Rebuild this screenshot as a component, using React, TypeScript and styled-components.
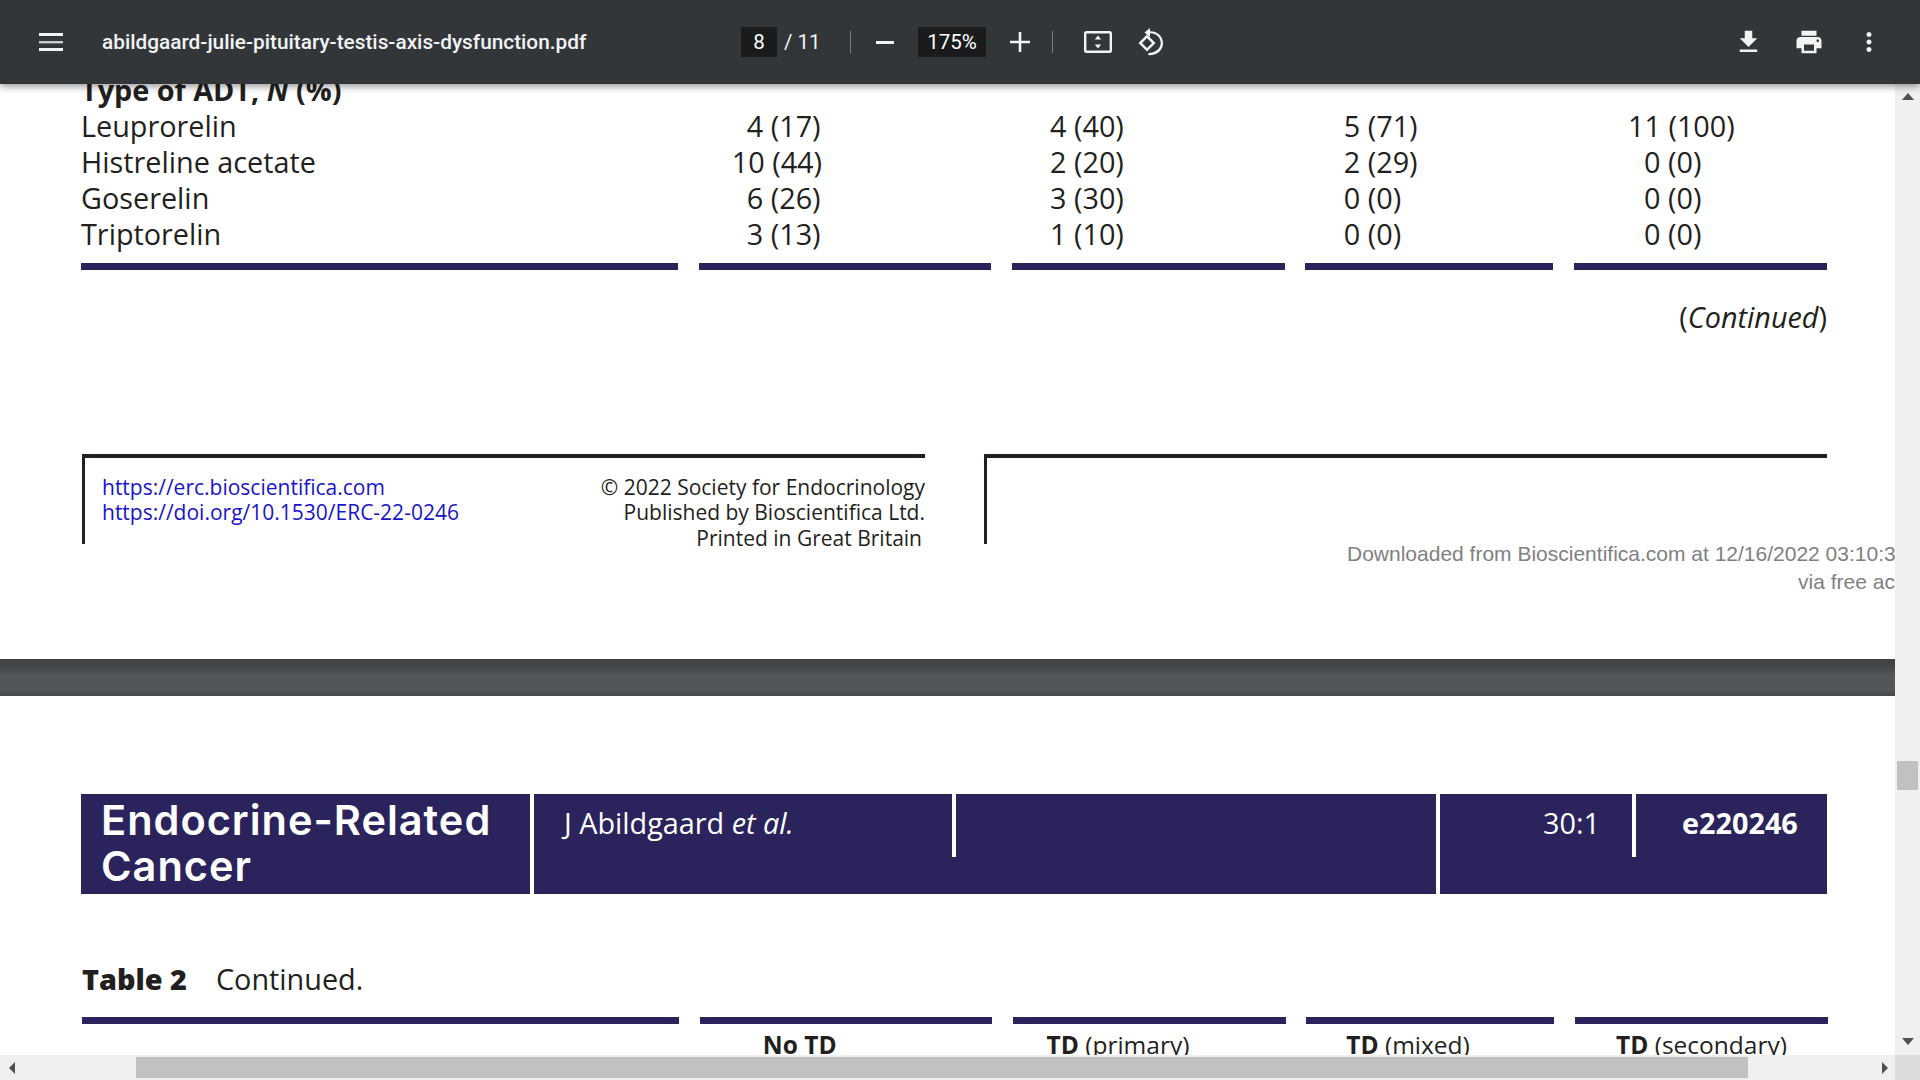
import React from "react";
import styled, { createGlobalStyle } from "styled-components";

const Global = createGlobalStyle`
  html, body { margin: 0; padding: 0; background: #fff; }
  #root { width: 1920px; height: 1080px; }
`;

const navy = "#2b235c";
const ink = "#231f20";

const Shell = styled.div`
  width: 1920px;
  height: 1080px;
  overflow: hidden;
  display: flex;
  flex-direction: column;
  font-family: "Open Sans", "Liberation Sans", sans-serif;
`;

const Toolbar = styled.header`
  position: relative;
  z-index: 2;
  flex: 0 0 84px;
  display: flex;
  align-items: center;
  padding-left: 39px;
  background: #323639;
  color: #f1f3f4;
  font-family: Roboto, "Liberation Sans", sans-serif;
  box-shadow: 0 2px 8px rgba(0, 0, 0, 0.45);
`;

const MenuIcon = styled.svg`
  flex: 0 0 24px;
  width: 24px;
  height: 18px;
  fill: #f1f3f4;
  margin-right: 39px;
`;

const Title = styled.div`
  flex: 0 0 639px;
  font-size: 20.8px;
  font-weight: 500;
  white-space: nowrap;
`;

const Readout = styled.div<{ $w: number; $l?: number }>`
  flex: 0 0 ${(p) => p.$w}px;
  height: 30px;
  margin-left: ${(p) => p.$l ?? 0}px;
  display: flex;
  align-items: center;
  justify-content: center;
  background: #191b1c;
  font-size: 20.5px;
  color: #fff;
`;

const PageCount = styled.div`
  flex: 0 0 73px;
  padding-left: 7px;
  box-sizing: border-box;
  font-size: 20.5px;
  white-space: nowrap;
`;

const Divider = styled.div<{ $l?: number }>`
  flex: 0 0 1px;
  height: 22px;
  margin-left: ${(p) => p.$l ?? 0}px;
  background: #7d8083;
`;

const GlyphSvg = styled.svg<{ $w: number; $h: number; $l: number; $r?: number }>`
  flex: 0 0 ${(p) => p.$w}px;
  width: ${(p) => p.$w}px;
  height: ${(p) => p.$h}px;
  margin-left: ${(p) => p.$l}px;
  margin-right: ${(p) => p.$r ?? 0}px;
  fill: #f1f3f4;
`;

const Viewer = styled.div`
  flex: 1;
  min-height: 0;
  display: grid;
  grid-template-columns: 1fr 25px;
  grid-template-rows: 1fr 25px;
`;

const Doc = styled.main`
  overflow: hidden;
  min-width: 0;
  background: #fff;
  color: ${ink};
  font-size: 28.8px;
`;

const PageOne = styled.section`
  height: 575px;
  padding-left: 81px;
  display: flow-root;
`;

const Scrolled = styled.div`
  margin-top: -12px;
`;

const Grid = styled.div<{ $shift?: number; $top?: number }>`
  width: 1746px;
  margin-left: ${(p) => p.$shift ?? 0}px;
  margin-top: ${(p) => p.$top ?? 0}px;
  display: grid;
  grid-template-columns: 597px 292px 273px 248px 253px;
  column-gap: 20.75px;
`;

const Cell = styled.div<{ $indent?: number; $bold?: boolean }>`
  height: 36px;
  line-height: 36px;
  padding-left: ${(p) => p.$indent ?? 0}px;
  white-space: nowrap;
  font-weight: ${(p) => (p.$bold ? 700 : 400)};
`;

const HeadCell = styled(Cell)`
  font-size: 24.5px;
`;

const Rule = styled.div`
  height: 7px;
  background: ${navy};
`;

const Continued = styled.div`
  width: 1746px;
  margin-top: 27.5px;
  height: 38px;
  line-height: 38px;
  text-align: right;
`;

const Footer = styled.div`
  margin-top: 118.5px;
  width: 1746px;
  display: flex;
  padding-left: 1px;
  box-sizing: border-box;
  gap: 59px;
`;

const FooterBox = styled.div`
  flex: 1;
  height: 90px;
  box-sizing: border-box;
  border-top: 4px solid #231f20;
  border-left: 3px solid #231f20;
  padding: 16.5px 0 0 17px;
  display: flex;
  justify-content: space-between;
  font-size: 21px;
  line-height: 25.5px;
`;

const Links = styled.div`
  color: #1a14c8;
`;

const Imprint = styled.div`
  text-align: right;
`;

const ImprintLast = styled.div`
  padding-right: 3px;
`;

const Stamp = styled.div`
  margin-top: -4px;
  font-family: "Liberation Sans", Arial, sans-serif;
  font-size: 21px;
  line-height: 28px;
  color: #808080;
  white-space: nowrap;
`;

const StampLine = styled.div<{ $left: number }>`
  margin-left: ${(p) => p.$left}px;
`;

const PageGap = styled.div`
  height: 37px;
  background: linear-gradient(180deg, #3f4244 0%, #44474a 20%, #525659 45%, #525659 85%, #45484b 100%);
`;

const PageTwo = styled.section`
  padding: 98px 0 0 81px;
`;

const Banner = styled.div`
  width: 1746px;
  display: flex;
  gap: 4px;
`;

const BannerCell = styled.div<{ $w: number }>`
  flex: 0 0 ${(p) => p.$w}px;
  height: 100px;
  background: ${navy};
  color: #fff;
  display: flex;
  align-items: flex-start;
`;

const Journal = styled.div`
  padding: 3px 0 0 20px;
  font-family: Inter, "Open Sans", sans-serif;
  font-size: 41.5px;
  font-weight: 600;
  letter-spacing: 1px;
  line-height: 46px;
`;

const BannerText = styled.div<{ $w: number; $left?: number; $right?: number; $bold?: boolean }>`
  flex: 0 0 ${(p) => p.$w}px;
  box-sizing: border-box;
  padding: 10.5px ${(p) => p.$right ?? 0}px 0 ${(p) => p.$left ?? 0}px;
  line-height: 36px;
  text-align: ${(p) => (p.$right ? "right" : "left")};
  font-weight: ${(p) => (p.$bold ? 700 : 400)};
  white-space: nowrap;
`;

const BannerTick = styled.div`
  flex: 0 0 4px;
  height: 63px;
  background: #fff;
`;

const Caption = styled.div`
  margin: 67px 0 0 1px;
  height: 36px;
  line-height: 36px;
  white-space: nowrap;
`;

const CaptionLabel = styled.b`
  font-weight: 800;
  margin-right: 29px;
`;

const VScroll = styled.div`
  background: #f0f0f0;
  display: flex;
  flex-direction: column;
  align-items: center;
`;

const Thumb = styled.div`
  margin-top: 661px;
  width: 21px;
  height: 29px;
  background: #c1c1c1;
`;

const HScroll = styled.div`
  grid-column: 1;
  grid-row: 2;
  background: #f0f0f0;
  display: flex;
  align-items: center;
`;

const HThumb = styled.div`
  margin-left: 120.5px;
  width: 1612px;
  height: 21px;
  background: #c1c1c1;
`;

const Corner = styled.div`
  background: #dcdcdc;
`;

const ArrowSvg = styled.svg<{ $mt?: number; $ml?: number; $mb?: number; $mr?: number }>`
  flex: 0 0 auto;
  fill: #505050;
  margin: ${(p) => p.$mt ?? 0}px ${(p) => p.$mr ?? 0}px ${(p) => p.$mb ?? 0}px ${(p) => p.$ml ?? 0}px;
`;

const Spacer = styled.div`
  flex: 1;
`;

const rows: [string, [string, number], [string, number], [string, number], [string, number]][] = [
  ["Leuprorelin", ["4 (17)", 48], ["4 (40)", 38.5], ["5 (71)", 38.5], ["11 (100)", 54]],
  ["Histreline acetate", ["10 (44)", 33], ["2 (20)", 38.5], ["2 (29)", 38.5], ["0 (0)", 70]],
  ["Goserelin", ["6 (26)", 48], ["3 (30)", 38.5], ["0 (0)", 38.5], ["0 (0)", 70]],
  ["Triptorelin", ["3 (13)", 48], ["1 (10)", 38.5], ["0 (0)", 38.5], ["0 (0)", 70]],
];

const heads: [string, string, number][] = [
  ["No TD", "", 63],
  ["TD", " (primary)", 34],
  ["TD", " (mixed)", 40],
  ["TD", " (secondary)", 41],
];

const RuleSet = () => (
  <>
    <Rule />
    <Rule />
    <Rule />
    <Rule />
    <Rule />
  </>
);

export default function App() {
  return (
    <Shell>
      <Global />
      <Toolbar>
        <MenuIcon viewBox="0 0 24 18">
          <rect y="0" width="24" height="3" />
          <rect y="8" width="24" height="2.4" opacity="0.8" />
          <rect y="15" width="24" height="3" />
        </MenuIcon>
        <Title>abildgaard-julie-pituitary-testis-axis-dysfunction.pdf</Title>
        <Readout $w={36}>8</Readout>
        <PageCount>/ 11</PageCount>
        <Divider />
        <GlyphSvg $w={18} $h={3} $l={25} viewBox="0 0 18 3">
          <rect width="18" height="3" />
        </GlyphSvg>
        <Readout $w={68} $l={24}>
          175%
        </Readout>
        <GlyphSvg $w={20} $h={20} $l={24} viewBox="0 0 20 20">
          <path d="M8.7 0h2.6v8.7H20v2.6h-8.7V20H8.7v-8.7H0V8.7h8.7z" />
        </GlyphSvg>
        <Divider $l={22} />
        <GlyphSvg $w={28} $h={22} $l={31} viewBox="0 0 28 22">
          <path
            fillRule="evenodd"
            d="M2.5 0h23A2.5 2.5 0 0 1 28 2.5v17a2.5 2.5 0 0 1-2.5 2.5h-23A2.5 2.5 0 0 1 0 19.5v-17A2.5 2.5 0 0 1 2.5 0zm0 2.4a.1.1 0 0 0-.1.1v17a.1.1 0 0 0 .1.1h23a.1.1 0 0 0 .1-.1v-17a.1.1 0 0 0-.1-.1z"
          />
          <path d="M14 4.500l3.200 4h-6.400zM14 17.500l-3.200-4h6.400z" />
        </GlyphSvg>
        <GlyphSvg $w={28} $h={28} $l={25} viewBox="0 0 28 28">
          <path d="M10 6.500l8.500 8.500L10 23.500 1.500 15zM10 10l-5 5 5 5 5-5z" fillRule="evenodd" />
          <path d="M13 0v3.200c6.500-.4 13 4.500 13 11.800 0 6.600-5 11.500-11 12l-3.500.2-.2-2.200c7-.1 12.400-4.400 12.400-10 0-6-5.200-9.900-10.700-9.700V9L7.500 4.500z" />
        </GlyphSvg>
        <Spacer />
        <GlyphSvg $w={31} $h={30} $l={0} viewBox="0 0 24 24">
          <path d="M19 9h-4V3H9v6H5l7 7 7-7zM5 18v2h14v-2H5z" />
        </GlyphSvg>
        <GlyphSvg $w={30} $h={30} $l={30} viewBox="0 0 24 24">
          <path d="M19 8H5c-1.660 0-3 1.340-3 3v6h4v4h12v-4h4v-6c0-1.660-1.340-3-3-3zm-3 11H8v-5h8v5zm3-7c-.55 0-1-.45-1-1s.45-1 1-1 1 .45 1 1-.45 1-1 1zm-1-9H6v4h12V3z" />
        </GlyphSvg>
        <GlyphSvg $w={30} $h={30} $l={30} $r={36} viewBox="0 0 24 24">
          <path d="M12 8c1.100 0 2-.9 2-2s-.9-2-2-2-2 .9-2 2 .9 2 2 2zm0 2c-1.100 0-2 .9-2 2s.9 2 2 2 2-.9 2-2-.9-2-2-2zm0 6c-1.100 0-2 .9-2 2s.9 2 2 2 2-.9 2-2-.9-2-2-2z" />
        </GlyphSvg>
      </Toolbar>
      <Viewer>
        <Doc>
          <PageOne>
            <Scrolled>
              <Grid>
                <Cell $bold>
                  Type of ADT, <i>N</i> (%)
                </Cell>
                <Cell />
                <Cell />
                <Cell />
                <Cell />
                {rows.map((r) => (
                  <React.Fragment key={r[0]}>
                    <Cell>{r[0]}</Cell>
                    {[r[1], r[2], r[3], r[4]].map(([t, i], k) => (
                      <Cell key={k} $indent={i}>
                        {t}
                      </Cell>
                    ))}
                  </React.Fragment>
                ))}
              </Grid>
              <Grid $top={11}>
                <RuleSet />
              </Grid>
              <Continued>
                (<i>Continued</i>)
              </Continued>
              <Footer>
                <FooterBox>
                  <Links>
                    https://erc.bioscientifica.com
                    <br />
                    https://doi.org/10.1530/ERC-22-0246
                  </Links>
                  <Imprint>
                    © 2022 Society for Endocrinology
                    <br />
                    Published by Bioscientifica Ltd.
                    <ImprintLast>Printed in Great Britain</ImprintLast>
                  </Imprint>
                </FooterBox>
                <FooterBox />
              </Footer>
              <Stamp>
                <StampLine $left={1266}>Downloaded from Bioscientifica.com at 12/16/2022 03:10:37AM</StampLine>
                <StampLine $left={1717}>via free access</StampLine>
              </Stamp>
            </Scrolled>
          </PageOne>
          <PageGap />
          <PageTwo>
            <Banner>
              <BannerCell $w={449}>
                <Journal>
                  Endocrine-Related
                  <br />
                  Cancer
                </Journal>
              </BannerCell>
              <BannerCell $w={902}>
                <BannerText $w={418} $left={30}>
                  J Abildgaard <i>et al.</i>
                </BannerText>
                <BannerTick />
              </BannerCell>
              <BannerCell $w={387}>
                <BannerText $w={192} $right={32}>
                  30:1
                </BannerText>
                <BannerTick />
                <BannerText $w={191} $left={46} $bold>
                  e220246
                </BannerText>
              </BannerCell>
            </Banner>
            <Caption>
              <CaptionLabel>Table 2</CaptionLabel>Continued.
            </Caption>
            <Grid $shift={1} $top={20}>
              <RuleSet />
            </Grid>
            <Grid $shift={1} $top={3}>
              <HeadCell />
              {heads.map(([b, t, i]) => (
                <HeadCell key={b + t} $indent={i}>
                  <b>{b}</b>
                  {t}
                </HeadCell>
              ))}
            </Grid>
          </PageTwo>
        </Doc>
        <VScroll>
          <ArrowSvg width="12" height="7" viewBox="0 0 12 7" $mt={9}>
            <path d="M6 0l6 7H0z" />
          </ArrowSvg>
          <Thumb />
          <Spacer />
          <ArrowSvg width="12" height="7" viewBox="0 0 12 7" $mb={10}>
            <path d="M6 7L0 0h12z" />
          </ArrowSvg>
        </VScroll>
        <HScroll>
          <ArrowSvg width="6" height="12" viewBox="0 0 6 12" $ml={9}>
            <path d="M0 6l6-6v12z" />
          </ArrowSvg>
          <HThumb />
          <Spacer />
          <ArrowSvg width="6" height="12" viewBox="0 0 6 12" $mr={7}>
            <path d="M6 6L0 0v12z" />
          </ArrowSvg>
        </HScroll>
        <Corner />
      </Viewer>
    </Shell>
  );
}
